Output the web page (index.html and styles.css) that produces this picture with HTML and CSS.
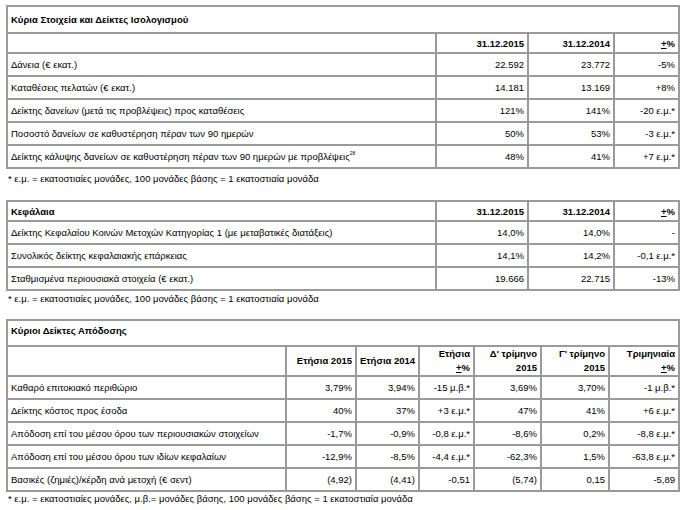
FILE: index.html
```html
<!DOCTYPE html>
<html lang="el">
<head>
<meta charset="utf-8">
<title>Κύρια Στοιχεία</title>
<link rel="stylesheet" href="styles.css">
</head>
<body>
<div class="page">
  <table class="grid t1">
    <colgroup><col class="c-label"><col class="c-num"><col class="c-num2"><col class="c-pct"></colgroup>
    <tr class="r-title"><td colspan="4" class="title">Κύρια Στοιχεία και Δείκτες Ισολογισμού</td></tr>
    <tr class="r-head"><td></td><th>31.12.2015</th><th>31.12.2014</th><th><u>+</u>%</th></tr>
    <tr class="r-data"><td>Δάνεια (€ εκατ.)</td><td class="n">22.592</td><td class="n">23.772</td><td class="n">-5%</td></tr>
    <tr class="r-data"><td>Καταθέσεις πελατών (€ εκατ.)</td><td class="n">14.181</td><td class="n">13.169</td><td class="n">+8%</td></tr>
    <tr class="r-data"><td>Δείκτης δανείων (μετά τις προβλέψεις) προς καταθέσεις</td><td class="n">121%</td><td class="n">141%</td><td class="n">-20 ε.μ.*</td></tr>
    <tr class="r-data"><td>Ποσοστό δανείων σε καθυστέρηση πέραν των 90 ημερών</td><td class="n">50%</td><td class="n">53%</td><td class="n">-3 ε.μ.*</td></tr>
    <tr class="r-data"><td>Δείκτης κάλυψης δανείων σε καθυστέρηση πέραν των 90 ημερών με προβλέψεις<sup>28</sup></td><td class="n">48%</td><td class="n">41%</td><td class="n">+7 ε.μ.*</td></tr>
  </table>
  <p class="note n1">* ε.μ. = εκατοστιαίες μονάδες, 100 μονάδες βάσης = 1 εκατοστιαία μονάδα</p>

  <table class="grid t2">
    <colgroup><col class="c-label"><col class="c-num"><col class="c-num2"><col class="c-pct"></colgroup>
    <tr class="r-head2"><td class="title">Κεφάλαια</td><th>31.12.2015</th><th>31.12.2014</th><th><u>+</u>%</th></tr>
    <tr class="r-data"><td>Δείκτης Κεφαλαίου Κοινών Μετοχών Κατηγορίας 1 (με μεταβατικές διατάξεις)</td><td class="n">14,0%</td><td class="n">14,0%</td><td class="n">-</td></tr>
    <tr class="r-data"><td>Συνολικός δείκτης κεφαλαιακής επάρκειας</td><td class="n">14,1%</td><td class="n">14,2%</td><td class="n">-0,1 ε.μ.*</td></tr>
    <tr class="r-data"><td>Σταθμισμένα περιουσιακά στοιχεία (€ εκατ.)</td><td class="n">19.666</td><td class="n">22.715</td><td class="n">-13%</td></tr>
  </table>
  <p class="note n2">* ε.μ. = εκατοστιαίες μονάδες, 100 μονάδες βάσης = 1 εκατοστιαία μονάδα</p>

  <table class="grid t3">
    <colgroup><col class="d-label"><col class="d-a"><col class="d-b"><col class="d-c"><col class="d-d"><col class="d-e"><col class="d-f"></colgroup>
    <tr class="r-title3"><td colspan="7" class="title">Κύριοι Δείκτες Απόδοσης</td></tr>
    <tr class="r-head3"><td></td><th>Ετήσια 2015</th><th>Ετήσια 2014</th><th>Ετήσια<br><u>+</u>%</th><th>Δ' τρίμηνο<br>2015</th><th>Γ' τρίμηνο<br>2015</th><th>Τριμηνιαία<br><u>+</u>%</th></tr>
    <tr class="r-data"><td>Καθαρό επιτοκιακό περιθώριο</td><td class="n">3,79%</td><td class="n">3,94%</td><td class="n">-15 μ.β.*</td><td class="n">3,69%</td><td class="n">3,70%</td><td class="n">-1 μ.β.*</td></tr>
    <tr class="r-data"><td>Δείκτης κόστος προς έσοδα</td><td class="n">40%</td><td class="n">37%</td><td class="n">+3 ε.μ.*</td><td class="n">47%</td><td class="n">41%</td><td class="n">+6 ε.μ.*</td></tr>
    <tr class="r-data"><td>Απόδοση επί του μέσου όρου των περιουσιακών στοιχείων</td><td class="n">-1,7%</td><td class="n">-0,9%</td><td class="n">-0,8 ε.μ.*</td><td class="n">-8,6%</td><td class="n">0,2%</td><td class="n">-8,8 ε.μ.*</td></tr>
    <tr class="r-data"><td>Απόδοση επί του μέσου όρου των ιδίων κεφαλαίων</td><td class="n">-12,9%</td><td class="n">-8,5%</td><td class="n">-4,4 ε.μ.*</td><td class="n">-62,3%</td><td class="n">1,5%</td><td class="n">-63,8 ε.μ.*</td></tr>
    <tr class="r-data"><td>Βασικές (ζημιές)/κέρδη ανά μετοχή (€ σεντ)</td><td class="n">(4,92)</td><td class="n">(4,41)</td><td class="n">-0,51</td><td class="n">(5,74)</td><td class="n">0,15</td><td class="n">-5,89</td></tr>
  </table>
  <p class="note n3">* ε.μ. = εκατοστιαίες μονάδες, μ.β.= μονάδες βάσης, 100 μονάδες βάσης = 1 εκατοστιαία μονάδα</p>
</div>
</body>
</html>
```

FILE: styles.css
```css
html, body {
  margin: 0;
  padding: 0;
  background: #fff;
}
body {
  font-family: "Liberation Sans", Arial, sans-serif;
  font-size: 9.5px;
  color: #000;
}
.page {
  padding: 5px 0 0 6px;
}
.grid {
  border-collapse: collapse;
  table-layout: fixed;
  width: 672px;
}
.grid td, .grid th {
  border: 2px solid #9a9a9a;
  padding: 0 3px;
  vertical-align: middle;
  text-align: left;
  font-weight: normal;
  white-space: nowrap;
  overflow: hidden;
}
.grid th {
  font-weight: bold;
  text-align: right;
}
.grid .n {
  text-align: right;
}
.grid .title {
  font-weight: bold;
}
.c-label { width: 429px; }
.c-num { width: 92px; }
.c-num2 { width: 86px; }
.c-pct { width: 65px; }

.d-label { width: 279px; }
.d-a { width: 70px; }
.d-b { width: 63px; }
.d-c { width: 55px; }
.d-d { width: 67px; }
.d-e { width: 68px; }
.d-f { width: 70px; }

.r-title td { height: 25px; }
.r-head td, .r-head th { height: 18px; }
.r-data td { height: 21px; }
.r-head2 td, .r-head2 th { height: 18px; }
.r-title3 td { height: 20px; vertical-align: top; padding-top: 4px; }
.r-head3 td, .r-head3 th { height: 26px; line-height: 14px; }

sup {
  font-size: 5px;
  vertical-align: 5px;
  line-height: 0;
}
u {
  text-decoration: underline;
}
.note {
  margin: 0;
  line-height: 12px;
}
.n1 { padding: 4px 0 0 2px; height: 27px; }
.n2 { padding: 2px 0 0 2px; height: 26px; }
.n3 { padding: 2px 0 0 2px; line-height: 10px; }
```
